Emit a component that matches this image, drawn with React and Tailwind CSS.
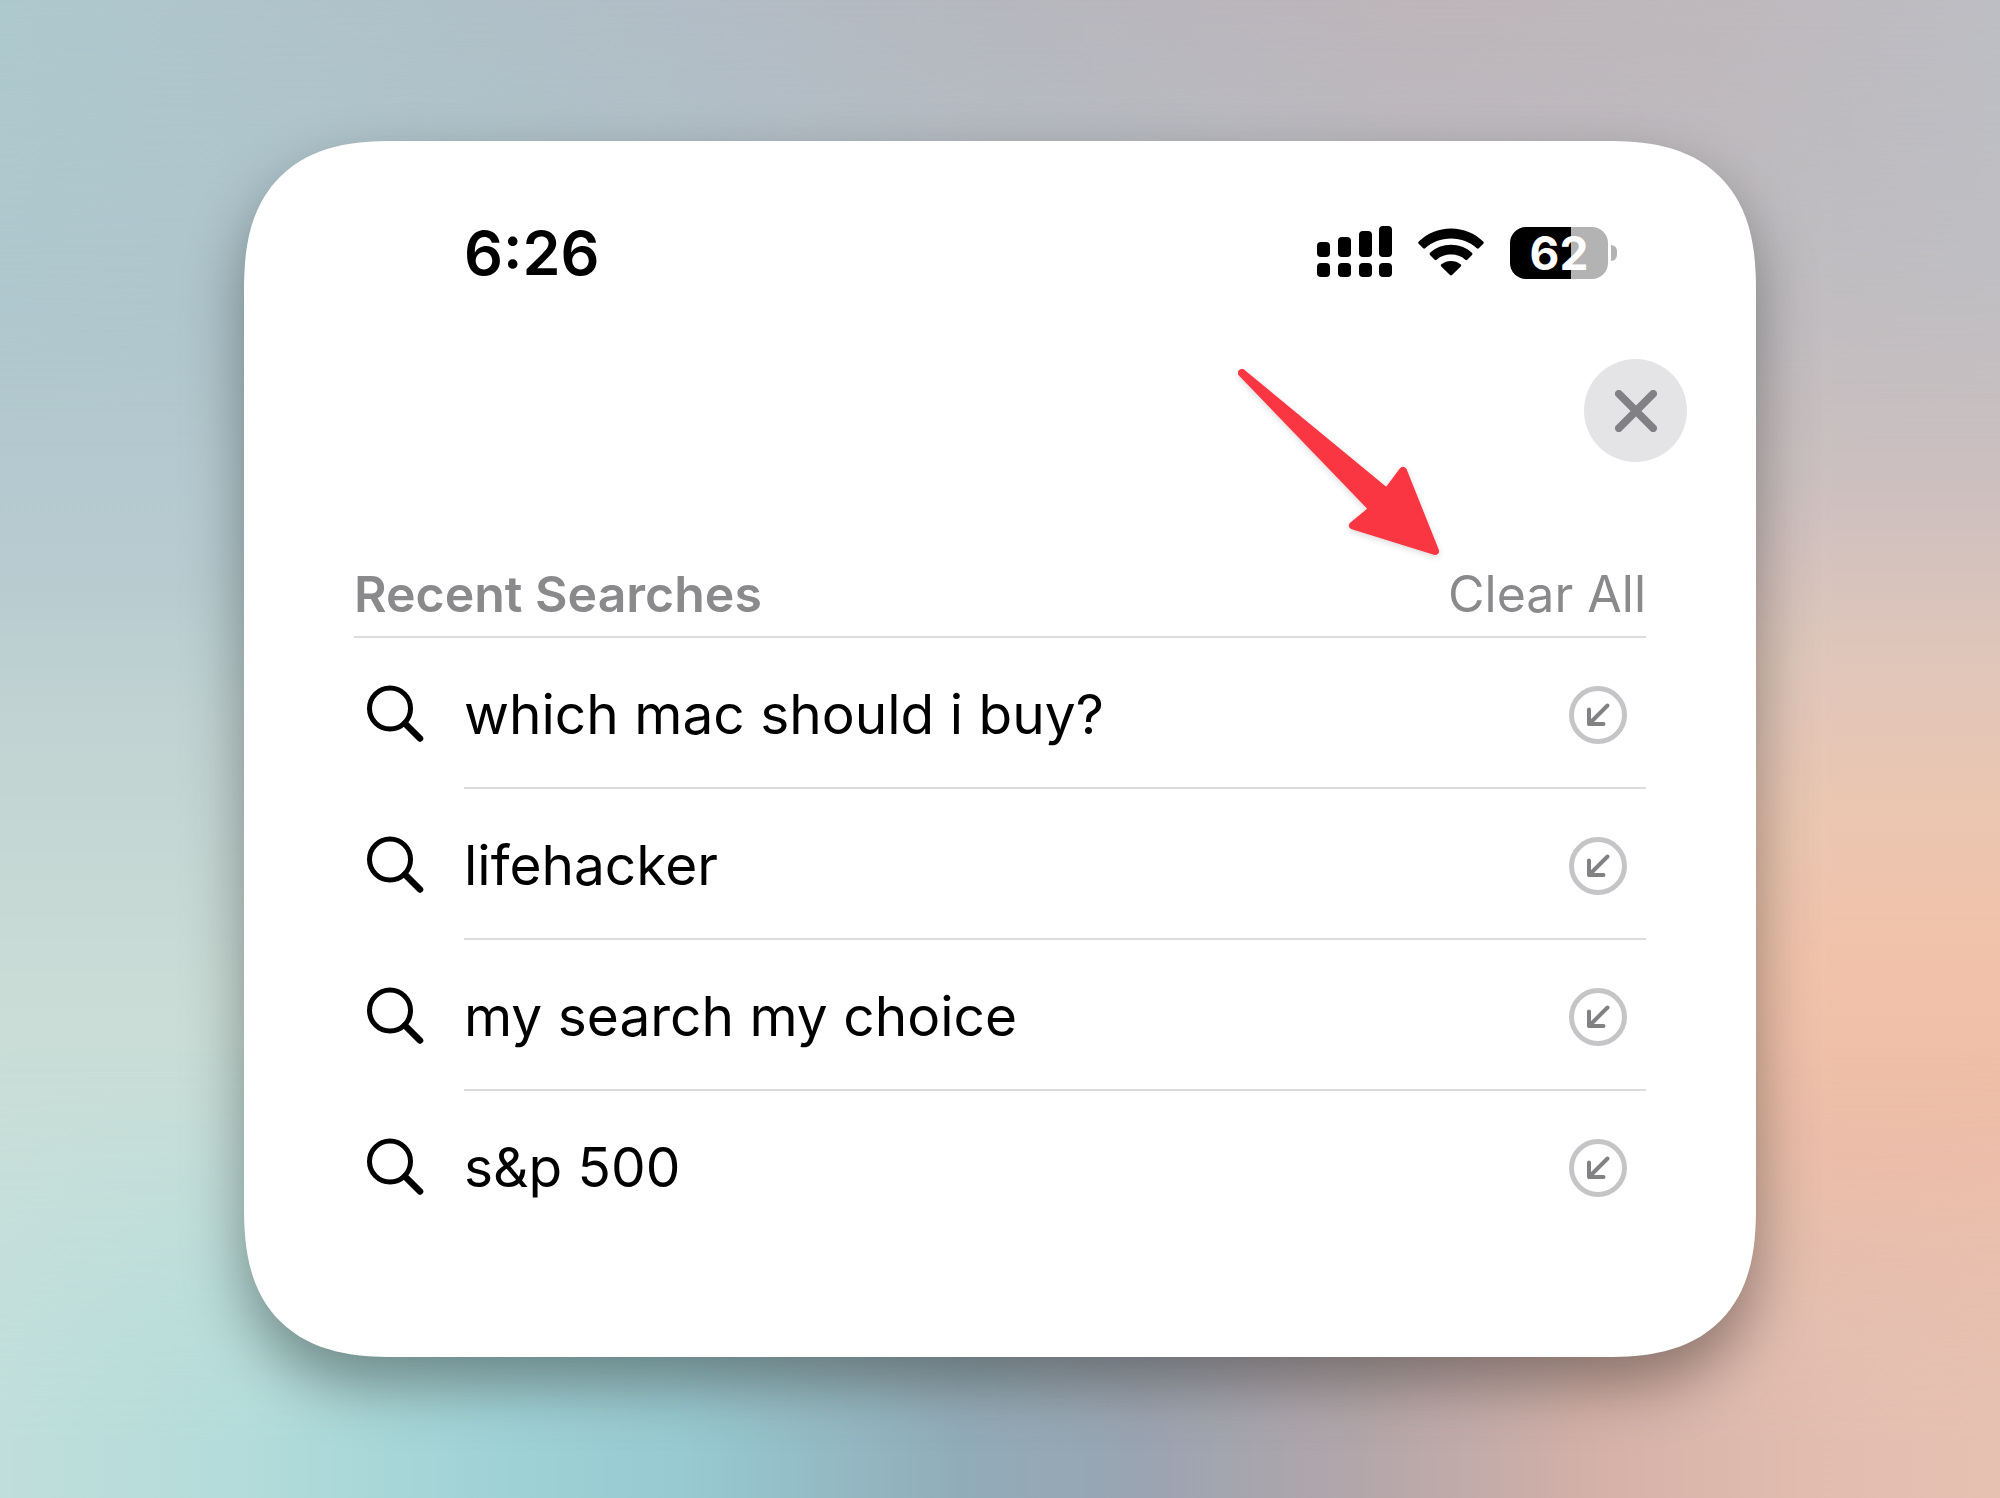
import React from "react";

const searches = ["which mac should i buy?", "lifehacker", "my search my choice", "s&p 500"];

function Backdrop() {
  return (
    <div aria-hidden="true" className="pointer-events-none absolute inset-0 -z-10">
      <div className="absolute inset-0 bg-[linear-gradient(180deg,#adc8cd_0%,#b0c7ce_20%,#b7cbd0_38%,#c1d3d2_48%,#cadcd6_66%,#c9e0da_82%,#c2dfdb_100%)]" />
      <div className="absolute inset-0 bg-[linear-gradient(180deg,#bdbec3_0%,#c1bfc2_18%,#ccbfbf_32%,#e0c6ba_44%,#ebc6b1_54%,#f1c2a9_64%,#efbda6_76%,#e9bfad_88%,#e6c0b1_100%)] mask-[linear-gradient(90deg,transparent_20%,black_92%)]" />
      <div className="absolute inset-0 bg-[linear-gradient(90deg,#adc8cd_0%,#afc3ca_15%,#b1bcc5_35%,#b6b7be_50%,#bdb5ba_70%,#beb7bb_85%,#bdbec3_100%)] mask-[linear-gradient(180deg,black_0%,transparent_30%)]" />
      <div className="absolute inset-0 bg-[linear-gradient(90deg,#c0dedb_0%,#b3dcda_12%,#9fd2d6_25%,#97cad1_34%,#91acb9_48%,#9aa4b2_57%,#b3a6aa_68%,#d5b1a8_80%,#e3beb0_92%,#e6c0b1_100%)] mask-[linear-gradient(180deg,transparent_70%,black_96%)]" />
    </div>
  );
}

function Signal() {
  return (
    <svg viewBox="0 0 75 54" className="h-[54px] w-[75px]" role="img" aria-label="Signal strength">
      <rect x="0" y="16" width="13" height="15" rx="4" />
      <rect x="21" y="11" width="13" height="20" rx="4" />
      <rect x="42" y="5" width="13" height="26" rx="4" />
      <rect x="62" y="0" width="13" height="31" rx="4" />
      <rect x="0" y="37" width="13" height="14" rx="4" />
      <rect x="21" y="37" width="13" height="14" rx="4" />
      <rect x="42" y="37" width="13" height="14" rx="4" />
      <rect x="62" y="37" width="13" height="14" rx="4" />
    </svg>
  );
}

function Wifi() {
  return (
    <svg viewBox="0 0 66 50" className="h-[50px] w-[66px]" role="img" aria-label="Wi-Fi">
      <path d="M.8 13.600C9 5.600 20.600 .6 33 .6s24 5 32.200 13c.7.7.7 1.500.1 2.200l-4.500 4.500c-.6.6-1.400.6-2 0C52 14 43 10.500 33 10.500S14 14 7.200 20.300c-.6.6-1.400.6-2 0L.7 15.800c-.6-.7-.6-1.500.1-2.200Z" />
      <path d="M12.100 24.800C17.600 19.600 25 16.800 33 16.800s15.400 2.800 20.900 8c.7.7.7 1.500.1 2.200l-4.700 4.700c-.6.600-1.400.600-2 0C43.400 28.300 38.400 26.600 33 26.600s-10.400 1.700-14.300 5.100c-.6.6-1.400.6-2 0L12 27c-.6-.7-.6-1.500.1-2.200Z" />
      <path d="M23.400 36.200C26 34.100 29.400 32.900 33 32.900s7 1.200 9.600 3.300c.8.700.8 1.500.1 2.200l-8.700 8.700c-.6.600-1.400.6-2 0l-8.700-8.700c-.7-.7-.7-1.500.1-2.200Z" />
    </svg>
  );
}

function Battery() {
  return (
    <div className="flex items-center gap-[3px]" role="img" aria-label="Battery 62 percent">
      <div className="flex h-[52px] w-[98px] items-center justify-center rounded-2xl bg-[linear-gradient(90deg,#000_62%,#b3b3b3_62%)] text-[46px] leading-none font-bold text-white">
        62
      </div>
      <div className="h-4 w-[6px] rounded-r-full bg-[#b3b3b3]" />
    </div>
  );
}

function SearchIcon() {
  return (
    <svg viewBox="0 0 58 58" className="size-[58px] shrink-0" fill="none" stroke="#000" aria-hidden="true">
      <circle cx="24" cy="23.500" r="20.500" strokeWidth="5" />
      <path d="m39 38.500 15 15" strokeWidth="6.500" strokeLinecap="round" />
    </svg>
  );
}

function FillIcon() {
  return (
    <svg viewBox="0 0 60 60" className="size-[60px]" fill="none" aria-hidden="true">
      <circle cx="30" cy="30" r="26.500" stroke="#c5c5c7" strokeWidth="5" />
      <path d="M39.500 20.500 21 39M21 24.500V39h14.500" stroke="#828284" strokeWidth="4" strokeLinecap="round" strokeLinejoin="round" />
    </svg>
  );
}

function Arrow() {
  return (
    <svg
      viewBox="0 0 204 190"
      className="absolute top-[226px] right-[316px] h-[190px] w-[204px] drop-shadow-[0_2px_3px_rgba(0,0,0,0.15)]"
      aria-hidden="true"
    >
      <path
        d="M6 6 151 125.500 167 104 199 184 117 158.500 137 142Z"
        fill="#fb3643"
        stroke="#fb3643"
        strokeWidth="8"
        strokeLinejoin="round"
      />
    </svg>
  );
}

export default function App() {
  return (
    <div className="relative isolate flex min-h-screen flex-col justify-center overflow-hidden px-[12.2%] font-['Inter',sans-serif] text-black">
      <Backdrop />
      <main className="relative flex flex-col rounded-[150px] bg-white pt-[76px] pb-[115px] shadow-[0_28px_60px_rgba(0,0,0,0.37)] [corner-shape:superellipse(1.34)]">
        <header className="flex items-center justify-between pr-[139px] pl-[220px]">
          <time className="text-[61px] leading-[72px] font-semibold">6:26</time>
          <div className="flex items-center gap-[26px]">
            <Signal />
            <Wifi />
            <Battery />
          </div>
        </header>
        <div className="mt-[70px] flex justify-end pr-[69px]">
          <button type="button" aria-label="Close" className="flex size-[103px] items-center justify-center rounded-full bg-[#e4e4e6]">
            <svg viewBox="0 0 44 44" className="size-[42px]" stroke="#818185" strokeWidth="8" strokeLinecap="round" aria-hidden="true">
              <path d="m4 4 36 36M40 4 4 40" />
            </svg>
          </button>
        </div>
        <Arrow />
        <section className="mt-[100px] px-[110px]">
          <div className="flex items-center justify-between border-b-2 border-[#dcdcde] pb-[10px] text-[50px] leading-[64px] text-[#8a8a8d]">
            <h1 className="font-semibold">Recent Searches</h1>
            <button type="button">Clear All</button>
          </div>
          <ul>
            {searches.map((text) => (
              <li key={text} className="group flex items-center">
                <div className="flex w-[110px] pl-3">
                  <SearchIcon />
                </div>
                <div className="flex flex-1 items-center justify-between border-b-2 border-[#dcdcde] pt-10 pr-[18px] pb-9 group-last:border-transparent">
                  <a href="#search" className="text-[55px] leading-[73px]">{text}</a>
                  <button type="button" aria-label={`Edit search ${text}`}>
                    <FillIcon />
                  </button>
                </div>
              </li>
            ))}
          </ul>
        </section>
      </main>
    </div>
  );
}
